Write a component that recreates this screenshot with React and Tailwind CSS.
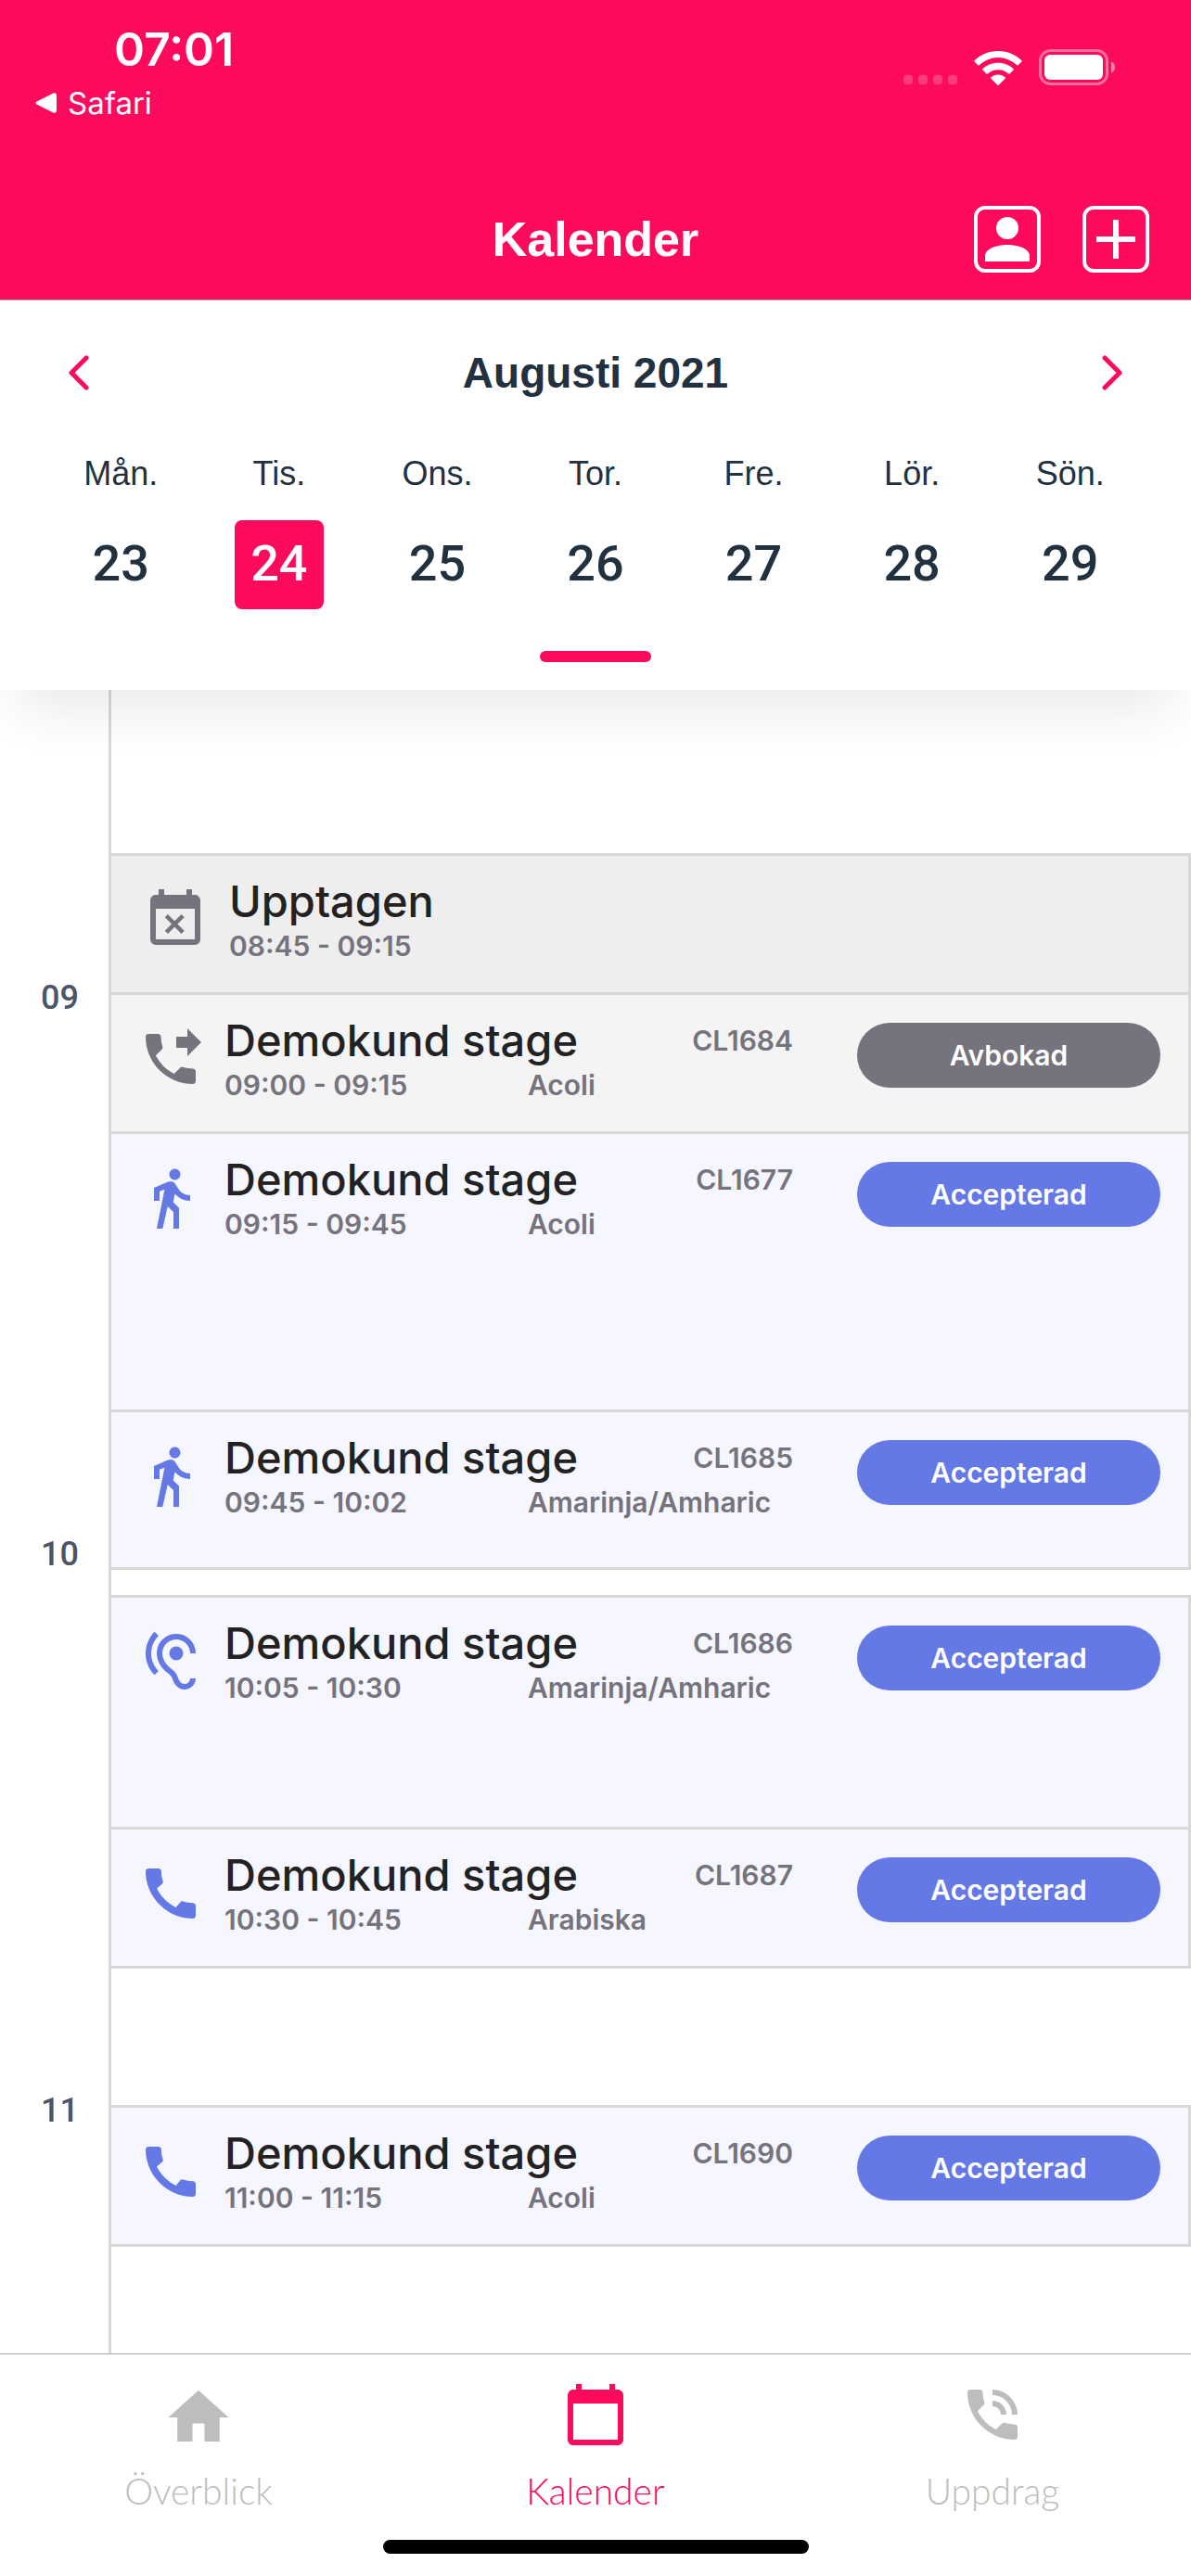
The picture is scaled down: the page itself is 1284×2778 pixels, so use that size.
import React, { useState } from 'react';
import {
  MdEventBusy,
  MdPhoneForwarded,
  MdDirectionsWalk,
  MdHearing,
  MdCall,
  MdCalendarToday,
  MdPhoneInTalk,
} from 'react-icons/md';

const DAYS = [
  { name: 'Mån.', date: 23 },
  { name: 'Tis.', date: 24 },
  { name: 'Ons.', date: 25 },
  { name: 'Tor.', date: 26 },
  { name: 'Fre.', date: 27 },
  { name: 'Lör.', date: 28 },
  { name: 'Sön.', date: 29 },
];

const HOURS = ['09', '10', '11'];

const PX_PER_MINUTE = 10;

// Slots in order, an entry without a title is free time
const SLOTS = [
  { minutes: 15, type: 'busy', title: 'Upptagen', time: '08:45 - 09:15' },
  { minutes: 15, type: 'cancelled', title: 'Demokund stage', time: '09:00 - 09:15', language: 'Acoli', code: 'CL1684', status: 'Avbokad', icon: MdPhoneForwarded },
  { minutes: 30, type: 'accepted', title: 'Demokund stage', time: '09:15 - 09:45', language: 'Acoli', code: 'CL1677', status: 'Accepterad', icon: MdDirectionsWalk },
  { minutes: 17, type: 'accepted', title: 'Demokund stage', time: '09:45 - 10:02', language: 'Amarinja/Amharic', code: 'CL1685', status: 'Accepterad', icon: MdDirectionsWalk },
  { minutes: 3 },
  { minutes: 25, type: 'accepted', title: 'Demokund stage', time: '10:05 - 10:30', language: 'Amarinja/Amharic', code: 'CL1686', status: 'Accepterad', icon: MdHearing },
  { minutes: 15, type: 'accepted', title: 'Demokund stage', time: '10:30 - 10:45', language: 'Arabiska', code: 'CL1687', status: 'Accepterad', icon: MdCall },
  { minutes: 15 },
  { minutes: 15, type: 'accepted', title: 'Demokund stage', time: '11:00 - 11:15', language: 'Acoli', code: 'CL1690', status: 'Accepterad', icon: MdCall },
];

// ─── Status bar ───────────────────────────────────────────────────────────────
const WifiIcon = () => (
  <svg width="52" height="38" viewBox="0 0 52 38" fill="white">
    <path d="M26 0C36 0 45 4 51.400 10.200Q52 10.900 51.400 11.500L47.700 15.300Q47 15.900 46.300 15.300A29 29 0 0 0 5.700 15.300Q5 15.900 4.300 15.300L.6 11.500Q0 10.900.6 10.200C7 4 16 0 26 0Z" />
    <path d="M26 12.700C32.500 12.700 38.300 15.200 42.600 19.200Q43.300 19.900 42.600 20.600L38.600 24.500Q38 25.100 37.300 24.500A17 17 0 0 0 14.700 24.500Q14 25.100 13.400 24.500L9.400 20.600Q8.700 19.900 9.400 19.200C13.700 15.200 19.500 12.700 26 12.700Z" />
    <path d="M26 25.400C29 25.400 31.600 26.500 33.600 28.300Q34.300 29 33.600 29.700L26.700 36.700Q26 37.400 25.300 36.700L18.400 29.700Q17.700 29 18.400 28.300C20.400 26.500 23 25.400 26 25.400Z" />
  </svg>
);

const BatteryIcon = () => (
  <svg width="83" height="40" viewBox="0 0 83 40" fill="none">
    <rect x="1.500" y="1.500" width="72" height="36" rx="11" stroke="white" strokeOpacity="0.4" strokeWidth="3" />
    <rect x="6" y="6" width="63" height="27" rx="6" fill="white" />
    <path d="M78 13.500C80.500 14.500 82 16.800 82 19.500S80.500 24.500 78 25.500Z" fill="white" fillOpacity="0.5" />
  </svg>
);

const StatusBar = () => (
  <div className="flex items-start justify-between pt-6 pr-[81px] pl-[37px]">
    <div>
      <p className="pl-[86px] text-[50px] leading-[58px] font-semibold">07:01</p>
      <a href="#safari" className="flex items-center gap-3 text-[33px] leading-[58px]">
        <svg width="24" height="22" viewBox="0 0 24 22" fill="white">
          <path d="M2.500 9.500L20.500.6Q24 -.4 24 3V19Q24 22.400 20.500 21.400L2.500 12.500Q.5 11 2.500 9.500Z" />
        </svg>
        Safari
      </a>
    </div>
    <div className="flex items-end gap-[18px] pt-[29px]">
      <div className="flex gap-1.5 pb-0.5">
        {[0, 1, 2, 3].map((dot) => (
          <span key={dot} className="size-[10px] rounded-[3px] bg-white/20" />
        ))}
      </div>
      <WifiIcon />
      <BatteryIcon />
    </div>
  </div>
);

// ─── Header ───────────────────────────────────────────────────────────────────
const Header = () => (
  <header className="h-[324px] border-b border-[#a7a7aa] bg-[#fb0a5e] text-white">
    <StatusBar />
    <div className="mt-[82px] grid grid-cols-[1fr_auto_1fr] items-center px-[45px]">
      <h1 className="col-start-2 font-['Liberation_Sans',sans-serif] text-[52px] leading-[72px] font-bold">
        Kalender
      </h1>
      <div className="flex justify-end gap-[45px]">
        <button aria-label="Profil" className="flex size-[72px] items-center justify-center rounded-[12px] border-4 border-white">
          <svg width="48" height="48" viewBox="0 0 48 48" fill="white">
            <circle cx="24" cy="12" r="12" />
            <path d="M0 48V42C0 34 13 30 24 30S48 34 48 42V48Z" />
          </svg>
        </button>
        <button aria-label="Lägg till" className="flex size-[72px] items-center justify-center rounded-[12px] border-4 border-white">
          <svg width="42" height="42" viewBox="0 0 42 42" fill="white">
            <path d="M18 0h6v18h18v6H24v18h-6V24H0v-6h18Z" />
          </svg>
        </button>
      </div>
    </div>
  </header>
);

// ─── Week picker ──────────────────────────────────────────────────────────────
const Chevron = ({ d }) => (
  <svg width="22" height="38" viewBox="0 0 22 38" fill="none" stroke="#fb0a5e" strokeWidth="5" strokeLinecap="round" strokeLinejoin="round">
    <path d={d} />
  </svg>
);

const WeekPicker = ({ selected, onSelect }) => (
  <section className="relative z-10 bg-white pt-12 font-['Liberation_Sans',sans-serif] text-[#22313f] shadow-[0_44px_50px_-20px_rgba(34,49,63,0.09)]">
    <div className="flex items-center justify-between px-[74px]">
      <button aria-label="Föregående vecka"><Chevron d="M19 3L3 19l16 16" /></button>
      <h2 className="text-[46px] leading-[60px] font-bold">Augusti 2021</h2>
      <button aria-label="Nästa vecka"><Chevron d="M3 3l16 16L3 35" /></button>
    </div>
    <div className="mt-[55px] grid grid-cols-7 px-[45px]">
      {DAYS.map((day) => (
        <button key={day.date} onClick={() => onSelect(day.date)} className="flex flex-col items-center gap-[26px]">
          <span className="text-[36px] leading-12">{day.name}</span>
          <span
            className={`flex size-24 items-center justify-center rounded-lg pb-1 font-[Roboto,sans-serif] text-[54px] font-medium ${
              day.date === selected ? 'bg-[#fb0a5e] text-white' : ''
            }`}
          >
            {day.date}
          </span>
        </button>
      ))}
    </div>
    <div className="flex justify-center pt-[45px] pb-[30px]">
      <span className="h-3 w-[120px] rounded-full bg-[#fb0a5e]" />
    </div>
  </section>
);

// ─── Timeline ─────────────────────────────────────────────────────────────────
const ROW_STYLES = {
  busy: 'bg-[#eeeeee] text-[#75737d] pl-[33px]',
  cancelled: 'bg-[#f4f4f4] text-[#75737d] pl-[28px]',
  accepted: 'bg-[#f6f6ff] text-[#6579e6] pl-[28px]',
};

const PILL_STYLES = {
  cancelled: 'bg-[#75737d]',
  accepted: 'bg-[#6579e6]',
};

const Slot = ({ slot }) => {
  const height = slot.minutes * PX_PER_MINUTE;

  if (!slot.title) {
    return <li className="border-t-3 border-[#d8d8d8]" style={{ height }} />;
  }

  const Icon = slot.icon || MdEventBusy;

  return (
    <li
      className={`flex items-start border-t-3 border-r-3 border-[#d8d8d8] pt-[19px] pr-[30px] ${ROW_STYLES[slot.type]}`}
      style={{ height }}
    >
      <Icon className="mt-[14px] size-[72px] shrink-0" />
      <div className="ml-[22px] grid flex-1 grid-cols-[327px_1fr] text-[30px] font-semibold text-[#75737d]">
        <h3 className="text-[47px] leading-[60px] font-medium whitespace-nowrap text-[#222222]">{slot.title}</h3>
        <span className="pr-[69px] text-right leading-[60px]">{slot.code}</span>
        <span className="leading-9">{slot.time}</span>
        <span className="leading-9">{slot.language}</span>
      </div>
      {slot.status && (
        <button className={`mt-[11px] h-[70px] w-[327px] rounded-full text-[30px] font-semibold text-white ${PILL_STYLES[slot.type]}`}>
          {slot.status}
        </button>
      )}
    </li>
  );
};

const Timeline = () => (
  <main className="flex">
    <div className="w-[117px] pt-[307px] pl-11 text-[36px] leading-[50px] text-[#4a5568]">
      {HOURS.map((hour) => (
        <div key={hour} className="h-[600px] font-[Roboto,sans-serif] font-medium last:h-[50px]">{hour}</div>
      ))}
    </div>
    <ul className="flex-1 border-l-3 border-[#d8d8d8] pt-44">
      {SLOTS.map((slot, i) => <Slot key={i} slot={slot} />)}
      <li className="h-[118px] border-t-3 border-[#d8d8d8]" />
    </ul>
  </main>
);

// ─── Tab bar ──────────────────────────────────────────────────────────────────
const HomeIcon = ({ className }) => (
  <svg viewBox="0 0 24 24" fill="currentColor" className={className}>
    <path d="M10 20v-6h4v6h5v-8h3L12 3 2 12h3v8z" />
  </svg>
);

const Tab = ({ icon, label, active }) => (
  <a href={`#${label}`} className={`flex flex-1 flex-col items-center ${active ? 'text-[#fb0a5e]' : 'text-[#bdbdbd]'}`}>
    <span className="flex h-[78px]">{icon}</span>
    <span className="mt-4 text-[39px] leading-12">{label}</span>
  </a>
);

const TabBar = () => (
  <footer className="border-t border-[#a7a7aa] bg-white pt-[29px] pb-6">
    <nav className="flex font-[Lato,sans-serif] font-light">
      <Tab icon={<HomeIcon className="size-[78px]" />} label="Överblick" />
      <Tab icon={<MdCalendarToday className="size-[72px]" />} label="Kalender" active />
      <Tab icon={<MdPhoneInTalk className="size-[72px]" />} label="Uppdrag" />
    </nav>
    <div className="mx-auto mt-[29px] h-[15px] w-[459px] rounded-full bg-black" />
  </footer>
);

export default function App() {
  const [selected, setSelected] = useState(24);

  return (
    <div className="min-h-screen bg-white font-[Inter,sans-serif]">
      <Header />
      <WeekPicker selected={selected} onSelect={setSelected} />
      <Timeline />
      <TabBar />
    </div>
  );
}
